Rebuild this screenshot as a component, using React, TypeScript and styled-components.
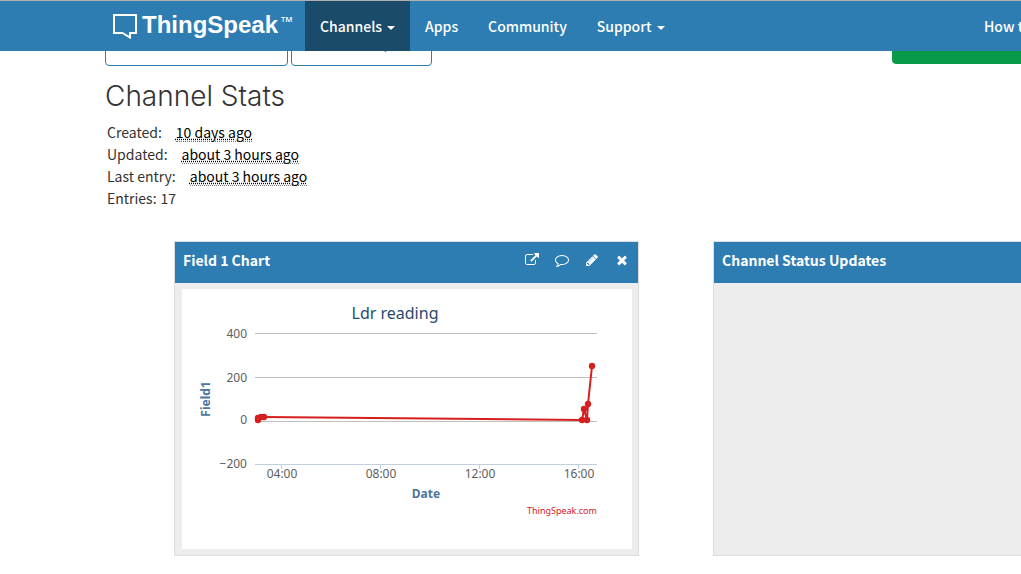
import React from "react";
import styled, { createGlobalStyle } from "styled-components";

const sourceSans = `"Noto Sans CJK SC", "Noto Sans", sans-serif`;
const chartFont = `"Noto Sans", "Open Sans", sans-serif`;
const blue = "#2e7db2";

const GlobalStyle = createGlobalStyle`
  *, *::before, *::after { box-sizing: border-box; }
  body {
    margin: 0;
    overflow-x: hidden;
    background: #fff;
    color: #333;
    font: 14px/22px ${sourceSans};
  }
`;

const NavBar = styled.header`
  position: sticky;
  top: 0;
  z-index: 10;
  overflow: hidden;
  border-top: 1px solid #b0b0b0;
  background: ${blue};
`;

const NavInner = styled.nav`
  display: flex;
  align-items: stretch;
  height: 50px;
  min-width: 1270px;
  padding: 0 105px;
`;

const Brand = styled.a`
  display: flex;
  align-items: center;
  width: 200px;
  padding-left: 8px;
  color: #fff;
  font: bold 24px/28px "Liberation Sans", Arial, sans-serif;
  text-decoration: none;
  svg { margin-right: 5px; }
`;

const BrandName = styled.span`
  padding-bottom: 2px;
`;

const TradeMark = styled.span`
  align-self: flex-start;
  margin: 7px 0 0 2px;
  font-size: 13px;
  font-weight: normal;
`;

const NavLink = styled.a<{ $active?: boolean }>`
  display: flex;
  align-items: center;
  gap: 5px;
  padding: 0 15px;
  background: ${(p) => (p.$active ? "#1b4b6b" : "transparent")};
  color: #fff;
  font-size: 14px;
  font-weight: 500;
  white-space: nowrap;
  text-decoration: none;
`;

const Caret = styled.span`
  margin-top: 3px;
  border: 4px solid transparent;
  border-top-color: currentColor;
  border-bottom: 0;
`;

const NavRight = styled.div`
  display: flex;
  margin-left: auto;
  width: 196px;
`;

const Page = styled.main`
  overflow: hidden;
`;

const Content = styled.div`
  min-width: 1270px;
  padding: 0 105px 18px;
`;

const ButtonRow = styled.div`
  display: flex;
  align-items: flex-start;
  gap: 3px;
  margin-top: -19px;
`;

const Button = styled.button<{ $solid?: boolean; $wide?: boolean }>`
  display: flex;
  align-items: center;
  justify-content: center;
  gap: 10px;
  width: ${(p) => (p.$wide ? 183 : 141)}px;
  height: ${(p) => (p.$solid ? 32 : 34)}px;
  padding: 0 12px 14px;
  border: 1px solid ${(p) => (p.$solid ? "#089a47" : blue)};
  border-radius: 4px;
  background: ${(p) => (p.$solid ? "#089a47" : "#fff")};
  color: ${(p) => (p.$solid ? "#fff" : blue)};
  font: 14px/20px ${sourceSans};
  white-space: nowrap;
`;

const PushRight = styled.div`
  margin-left: auto;
  width: 273px;
`;

const Heading = styled.h2`
  margin: 14px 0 9px;
  font: 300 28px/32px Inter, Lato, sans-serif;
`;

const Stats = styled.dl`
  margin: 0;
  padding-left: 2px;
`;

const StatRow = styled.div<{ $tight?: boolean }>`
  display: flex;
  gap: ${(p) => (p.$tight ? 4 : 14)}px;
  height: 22px;
  dd { margin: 0; }
`;

const TimeAgo = styled.abbr`
  display: block;
  height: 21px;
  border-bottom: 1px dotted #777;
  color: #000;
  text-decoration: underline dotted;
`;

const Cards = styled.div`
  display: flex;
  gap: 74px;
  margin: 32px 0 0 69px;
`;

const Card = styled.section`
  display: flex;
  flex-direction: column;
  flex: 0 0 465px;
  border: 1px solid #ddd;
  background: #ededed;
`;

const CardHeader = styled.div`
  display: flex;
  align-items: center;
  justify-content: space-between;
  height: 41px;
  padding: 0 9px 6px 8px;
  background: ${blue};
  color: #fff;
`;

const CardTitle = styled.h3`
  margin: 0;
  font: bold 14px/20px ${sourceSans};
`;

const Tools = styled.div`
  display: flex;
  gap: 16px;
`;

const ToolButton = styled.button`
  display: block;
  padding: 0;
  border: 0;
  background: none;
  color: inherit;
  svg { display: block; }
`;

const CardBody = styled.div`
  padding: 6px 6px 6px 7px;
`;

const ChartBox = styled.svg`
  display: block;
  background: #fff;
  font-family: ${chartFont};
  .label { font-size: 12px; fill: #606060; }
  .axis { font-size: 12px; font-weight: bold; fill: #4d759e; }
  .title { font-size: 16px; fill: #274b6d; }
  .credit { font-size: 9px; fill: #d62020; }
`;

const icons = {
  Open: "M1408 928v320q0 119-84.500 203.500t-203.500 84.500h-832q-119 0-203.500-84.500t-84.500-203.500v-832q0-119 84.500-203.500t203.500-84.500h704q14 0 23 9t9 23v64q0 14-9 23t-23 9h-704q-66 0-113 47t-47 113v832q0 66 47 113t113 47h832q66 0 113-47t47-113v-320q0-14 9-23t23-9h64q14 0 23 9t9 23zm384-864v512q0 26-19 45t-45 19-45-19l-176-176-652 652q-10 10-23 10t-23-10l-114-114q-10-10-10-23t10-23l652-652-176-176q-19-19-19-45t19-45 45-19h512q26 0 45 19t19 45z",
  Comment: "M896 384q-204 0-381.500 69.500t-282 187.500-104.500 255q0 112 71.500 213.500t201.500 175.500l87 50-27 96q-24 91-70 172 152-63 275-171l43-38 57 6q69 8 130 8 204 0 381.500-69.500t282-187.500 104.500-255-104.500-255-282-187.500-381.500-69.500zm896 512q0 174-120 321.500t-326 233-450 85.500q-70 0-145-8-198 175-460 242-49 14-114 22h-5q-15 0-27-10.500t-16-27.500v-1q-3-4-.5-12t2-10 4.500-9.500l6-9 7-8.500 8-9q7-8 31-34.500t34.500-38 31-39.500 32.500-51 27-59 26-76q-157-89-247.500-220t-90.500-281q0-174 120-321.500t326-233 450-85.500 450 85.500 326 233 120 321.500z",
  Edit: "M491 1536l91-91-235-235-91 91v107h128v128h107zm523-928q0-22-22-22-10 0-17 7l-542 542q-7 7-7 17 0 22 22 22 10 0 17-7l542-542q7-7 7-17zm-54-192l416 416-832 832h-416v-416zm683 96q0 53-37 90l-166 166-416-416 166-165q36-38 90-38 53 0 91 38l235 234q37 39 37 91z",
  Close: "M1490 1322q0 40-28 68l-136 136q-28 28-68 28t-68-28l-294-294-294 294q-28 28-68 28t-68-28l-136-136q-28-28-28-68t28-68l294-294-294-294q-28-28-28-68t28-68l136-136q28-28 68-28t68 28l294 294 294-294q28-28 68-28t68 28l136 136q28 28 28 68t-28 68l-294 294 294 294q28 28 28 68z",
};

const PlusIcon = () => (
  <svg width="14" height="12" viewBox="0 0 14 12" aria-hidden="true">
    <path d="M2 1h10v10H2zM7 3v6M4 6h6" fill="none" stroke="currentColor" />
  </svg>
);

const points: [number, number][] = [
  [76, 131], [76, 129], [79, 128], [82, 128],
  [400, 131], [402, 120], [405, 131], [406, 115], [410, 77],
];

const yTicks: [string, number][] = [["400", 44], ["200", 88], ["0", 132]];
const xTicks: [string, number][] = [["04:00", 99], ["08:00", 198], ["12:00", 297], ["16:00", 396]];

const Chart = () => (
  <ChartBox width="450" height="260" viewBox="0 0 450 260" role="img" aria-label="Ldr reading">
    <text className="title" x="213" y="30" textAnchor="middle">Ldr reading</text>
    {yTicks.map(([label, y]) => (
      <g key={label}>
        <path d={`M73 ${y + 0.5}H415`} stroke="#c0c0c0" />
        <text className="label" x="65" y={label === "0" ? 135 : y + 5} textAnchor="end">{label}</text>
      </g>
    ))}
    <path d="M73 175.500H415" stroke="#c0d0e0" />
    <text className="label" x="65" y="179" textAnchor="end">−200</text>
    {xTicks.map(([label, x]) => (
      <g key={label}>
        <path d={`M${x + 0.5} 175V180`} stroke="#c0d0e0" />
        <text className="label" x={x + 1} y="189" textAnchor="middle">{label}</text>
      </g>
    ))}
    <polyline points={points.map((p) => p.join()).join(" ")} fill="none" stroke="#d62020" strokeWidth="2" strokeLinejoin="round" />
    {points.map(([x, y]) => <circle key={`${x}-${y}`} cx={x} cy={y} r="3.200" fill="#d62020" />)}
    <text className="axis" x="244" y="209" textAnchor="middle">Date</text>
    <text className="axis" transform="translate(28 110) rotate(-90)" textAnchor="middle">Field1</text>
    <text className="credit" x="415" y="225" textAnchor="end">ThingSpeak.com</text>
  </ChartBox>
);

export default function App() {
  return (
    <>
      <GlobalStyle />
      <NavBar>
        <NavInner>
          <Brand href="#">
            <svg width="24" height="26" viewBox="0 0 24 26" aria-hidden="true">
              <path d="M1 2H23V20H17V24.500L9.500 20H1Z" fill="none" stroke="#fff" strokeWidth="2" />
            </svg>
            <BrandName>ThingSpeak</BrandName><TradeMark>™</TradeMark>
          </Brand>
          <NavLink href="#" $active>Channels<Caret /></NavLink>
          <NavLink href="#">Apps</NavLink>
          <NavLink href="#">Community</NavLink>
          <NavLink href="#">Support<Caret /></NavLink>
          <NavRight><NavLink href="#">How to Buy</NavLink></NavRight>
        </NavInner>
      </NavBar>
      <Page>
        <Content>
          <ButtonRow>
            <Button $wide><PlusIcon />Add Visualizations</Button>
            <Button><PlusIcon />Data Export</Button>
            <PushRight><Button $solid>MATLAB Analysis</Button></PushRight>
          </ButtonRow>
          <Heading>Channel Stats</Heading>
          <Stats>
            <StatRow><dt>Created:</dt><dd><TimeAgo title="10 days ago">10 days ago</TimeAgo></dd></StatRow>
            <StatRow><dt>Updated:</dt><dd><TimeAgo title="about 3 hours ago">about 3 hours ago</TimeAgo></dd></StatRow>
            <StatRow><dt>Last entry:</dt><dd><TimeAgo title="about 3 hours ago">about 3 hours ago</TimeAgo></dd></StatRow>
            <StatRow $tight><dt>Entries:</dt><dd>17</dd></StatRow>
          </Stats>
          <Cards>
            <Card>
              <CardHeader>
                <CardTitle>Field 1 Chart</CardTitle>
                <Tools>
                  {Object.entries(icons).map(([name, d]) => (
                    <ToolButton key={name} aria-label={name}>
                      <svg width="14" height="14" viewBox="0 0 1792 1792" fill="currentColor"><path d={d} /></svg>
                    </ToolButton>
                  ))}
                </Tools>
              </CardHeader>
              <CardBody><Chart /></CardBody>
            </Card>
            <Card>
              <CardHeader><CardTitle>Channel Status Updates</CardTitle></CardHeader>
            </Card>
          </Cards>
        </Content>
      </Page>
    </>
  );
}
